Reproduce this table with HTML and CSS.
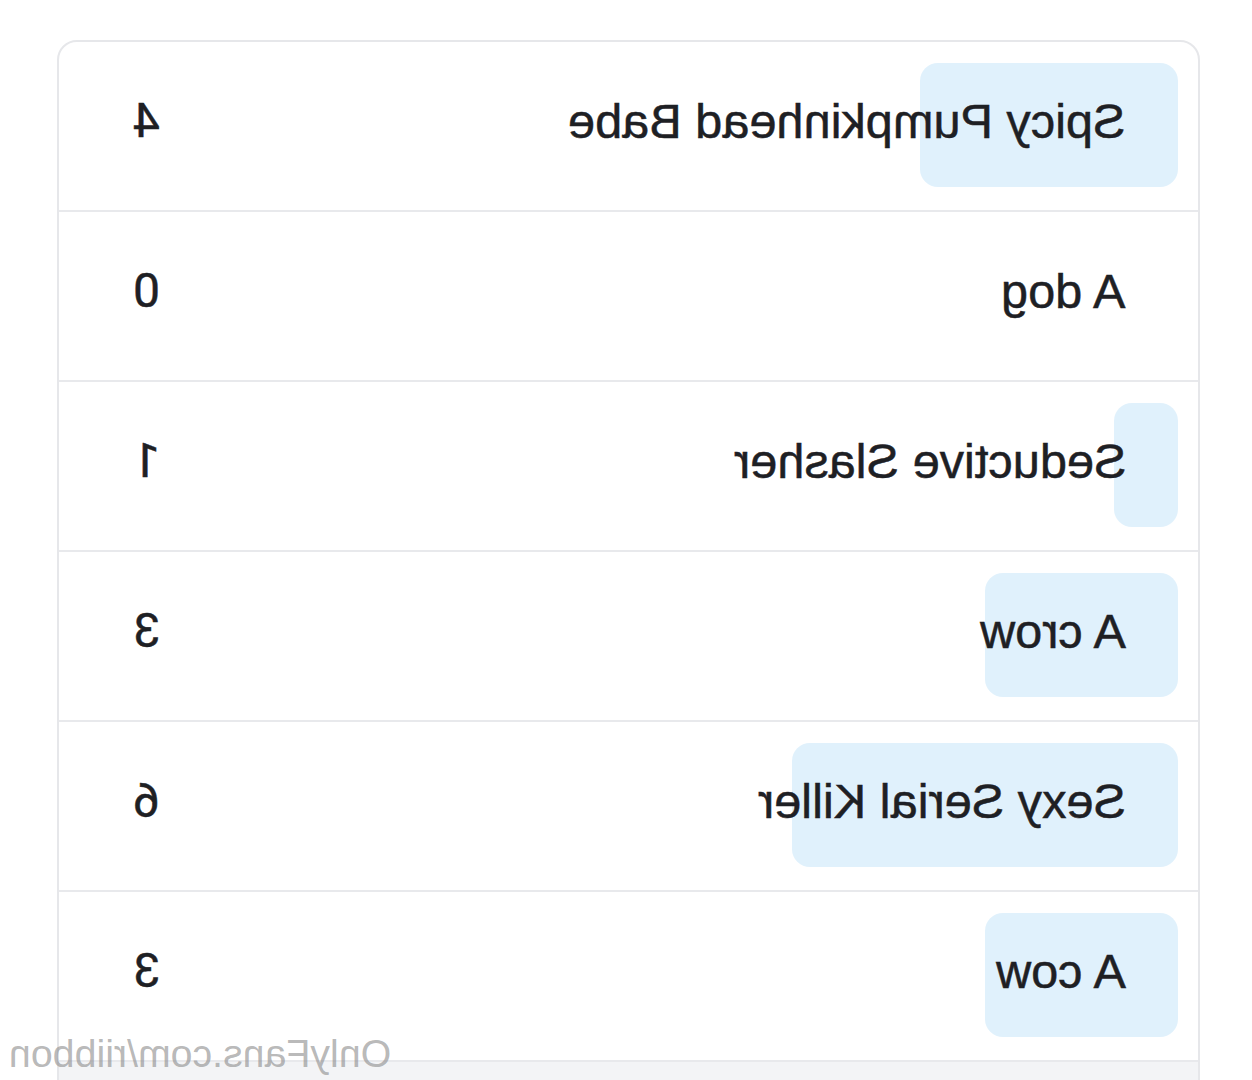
FILE: index.html
```html
<!DOCTYPE html>
<html lang="en">
<head>
<meta charset="utf-8">
<title>Poll results</title>
<link rel="stylesheet" href="styles.css">
</head>
<body>
<main class="page">
  <section class="card">
    <div class="row">
      <div class="track"><div class="fill" style="width: 23.53%"></div></div>
      <div class="content"><span class="num mirror">4</span><span class="label mirror">Spicy Pumpkinhead Babe</span></div>
    </div>
    <div class="row">
      <div class="track"><div class="fill" style="width: 0%"></div></div>
      <div class="content"><span class="num mirror">0</span><span class="label mirror">A dog</span></div>
    </div>
    <div class="row">
      <div class="track"><div class="fill" style="width: 5.88%"></div></div>
      <div class="content"><span class="num mirror">1</span><span class="label mirror">Seductive Slasher</span></div>
    </div>
    <div class="row">
      <div class="track"><div class="fill" style="width: 17.65%"></div></div>
      <div class="content"><span class="num mirror">3</span><span class="label mirror">A crow</span></div>
    </div>
    <div class="row">
      <div class="track"><div class="fill" style="width: 35.29%"></div></div>
      <div class="content"><span class="num mirror">6</span><span class="label mirror">Sexy Serial Killer</span></div>
    </div>
    <div class="row">
      <div class="track"><div class="fill" style="width: 17.65%"></div></div>
      <div class="content"><span class="num mirror">3</span><span class="label mirror">A cow</span></div>
    </div>
    <div class="footer"></div>
  </section>
  <div class="watermark mirror">OnlyFans.com/riibbon</div>
</main>
</body>
</html>
```

FILE: styles.css
```css
* { box-sizing: border-box; }
html, body { margin: 0; padding: 0; background: #ffffff; }
body {
  font-family: "Liberation Sans", Arial, sans-serif;
  color: #1e2024;
  width: 1252px;
  height: 1080px;
  overflow: hidden;
}
.page {
  position: relative;
  padding-top: 40px;
  padding-left: 57px;
}
.card {
  width: 1143px;
  border: 2px solid #e6e7ea;
  border-radius: 20px;
  overflow: hidden;
  background: #ffffff;
}
.row {
  display: grid;
  grid-template-columns: 1fr;
  grid-template-rows: 168px;
}
.row + .row, .footer {
  border-top: 2px solid #e8e9ec;
}
.track {
  grid-area: 1 / 1;
  margin: 21px 20px 23px 24px;
  display: flex;
  justify-content: flex-end;
}
.fill {
  height: 100%;
  background: #e0f1fc;
  border-radius: 18px;
}
.content {
  grid-area: 1 / 1;
  display: flex;
  justify-content: space-between;
  align-items: center;
  padding: 0 72px 10px 74px;
  font-size: 48.7px;
  line-height: 1;
  position: relative;
  -webkit-text-stroke: 0.5px #1e2024;
}
.mirror {
  display: inline-block;
  transform: scaleX(-1);
}
.num, .label { white-space: nowrap; }
.num {
  font-family: Roboto, "Liberation Sans", sans-serif;
  font-size: 48px;
}
.footer {
  height: 60px;
  background: #f3f4f6;
}
.watermark {
  position: absolute;
  left: 9px;
  top: 1034px;
  font-size: 39.3px;
  line-height: 1;
  font-weight: 400;
  color: rgba(140, 140, 140, 0.62);
  white-space: nowrap;
}
```
